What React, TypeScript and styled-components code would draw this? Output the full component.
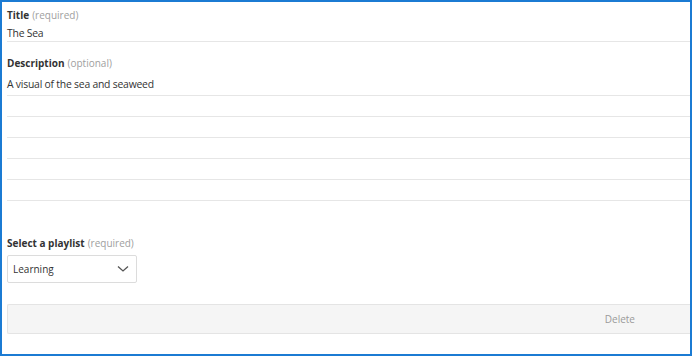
import React from "react";
import styled, { createGlobalStyle } from "styled-components";

const Global = createGlobalStyle`
  html, body { margin: 0; padding: 0; background: #ffffff; }
  body { font-family: "Open Sans", "Noto Sans", Arial, sans-serif; color: #333333; }
  * { box-sizing: border-box; }
`;

const Frame = styled.div`
  width: 692px;
  height: 356px;
  border: 2px solid #1b7bd3;
  background: #ffffff;
  padding: 6px 0 0 5px;
  display: flex;
  flex-direction: column;
`;

const Field = styled.div<{ $mt?: number }>`
  display: flex;
  flex-direction: column;
  margin-top: ${(p) => p.$mt ?? 0}px;
`;

const Label = styled.div`
  font-size: 10px;
  line-height: 14px;
  font-weight: 700;
  color: #333333;
`;

const Hint = styled.span`
  font-weight: 400;
  color: #a0a0a0;
  margin-left: 3px;
`;

const LineRow = styled.div<{ $h: number; $pb?: number }>`
  height: ${(p) => p.$h}px;
  border-bottom: 1px solid #e6e6e6;
  font-size: 10.4px;
  letter-spacing: -0.22px;
  line-height: 14px;
  color: #333333;
  display: flex;
  align-items: flex-end;
  padding-bottom: ${(p) => p.$pb ?? 0}px;
`;

const SelectBox = styled.div`
  width: 130px;
  height: 28px;
  border: 1px solid #dcdcdc;
  border-radius: 2px;
  margin-top: 5px;
  display: flex;
  align-items: center;
  justify-content: space-between;
  padding: 0 7px 0 5px;
  font-size: 10px;
  color: #333333;
`;

const Footer = styled.div`
  margin-top: 21px;
  height: 30px;
  border: 1px solid #e4e4e4;
  border-right: none;
  border-radius: 2px 0 0 2px;
  background: #f5f5f5;
  display: flex;
  align-items: center;
  justify-content: flex-end;
  padding-right: 55px;
`;

const DeleteButton = styled.span`
  font-size: 10px;
  color: #9a9a9a;
`;

export default function App() {
  return (
    <>
      <Global />
      <Frame>
        <Field>
          <Label>
            Title<Hint>(required)</Hint>
          </Label>
          <LineRow $h={20} $pb={1}>The Sea</LineRow>
        </Field>
        <Field $mt={14}>
          <Label>
            Description<Hint>(optional)</Hint>
          </Label>
          <LineRow $h={26} $pb={4}>A visual of the sea and seaweed</LineRow>
          {[0, 1, 2, 3, 4].map((i) => (
            <LineRow key={i} $h={21} />
          ))}
        </Field>
        <Field $mt={35}>
          <Label>
            Select a playlist<Hint>(required)</Hint>
          </Label>
          <SelectBox>
            <span>Learning</span>
            <svg width="12" height="8" viewBox="0 0 12 8" fill="none">
              <path d="M1 1.5 L6 6 L11 1.5" stroke="#555" strokeWidth="1.3" />
            </svg>
          </SelectBox>
        </Field>
        <Footer>
          <DeleteButton>Delete</DeleteButton>
        </Footer>
      </Frame>
    </>
  );
}
